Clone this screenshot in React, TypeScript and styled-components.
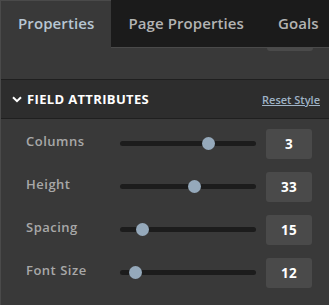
import React from 'react';
import styled, { createGlobalStyle } from 'styled-components';

const GlobalStyle = createGlobalStyle`
    html, body {
        margin: 0;
        padding: 0;
        background: #393939;
    }
    body {
        font-family: "Open Sans", "Liberation Sans", sans-serif;
    }
`;

const Panel = styled.div`
    width: 329px;
    height: 305px;
    box-sizing: border-box;
    background: #393939;
    border-left: 1px solid #4a4a4a;
    overflow: hidden;
`;

const TabBar = styled.div`
    display: flex;
    height: 48px;
    background: #1b1b1b;
`;

const Tab = styled.div<{ active?: boolean }>`
    display: flex;
    align-items: center;
    box-sizing: border-box;
    height: 48px;
    padding: 0 17px 2px;
    font-size: 15px;
    font-weight: 600;
    letter-spacing: 0.1px;
    white-space: nowrap;
    color: ${(props) => (props.active ? '#b7c6d3' : '#b3b3b3')};
    background: ${(props) => (props.active ? '#393939' : 'transparent')};
    border-top: 1px solid ${(props) => (props.active ? '#4a4a4a' : 'transparent')};
    border-bottom: 1px solid ${(props) => (props.active ? 'transparent' : '#4a4a4a')};
`;

const TabEdge = styled.div`
    width: 1px;
    height: 48px;
    background: #4a4a4a;
`;

const TopStrip = styled.div`
    display: flex;
    justify-content: flex-end;
    height: 31px;
    padding-right: 16px;
`;

const PeekBox = styled.div`
    width: 46px;
    height: 3px;
    background: #4a4a4a;
    border-radius: 0 0 3px 3px;
`;

const SectionHeader = styled.div`
    display: flex;
    align-items: center;
    height: 38px;
    padding: 0 9px 0 11px;
    background: #2d2d2d;
    border-top: 1px solid #1f1f1f;
    border-bottom: 1px solid #1f1f1f;
`;

const Chevron = styled.svg`
    width: 10px;
    height: 7px;
    margin-right: 5px;
`;

const SectionTitle = styled.div`
    flex: 1;
    color: #ffffff;
    font-size: 13px;
    font-weight: 700;
    letter-spacing: 0.35px;
`;

const ResetLink = styled.a`
    color: #9fb3c6;
    font-size: 11px;
    font-weight: 600;
    text-decoration: underline;
    cursor: pointer;
`;

const Rows = styled.div`
    display: flex;
    flex-direction: column;
    gap: 13px;
    padding: 10px 16px 0 25px;
`;

const Row = styled.div`
    display: flex;
    align-items: center;
    height: 30px;
`;

const Label = styled.div`
    width: 94px;
    margin-bottom: 6px;
    color: #a8a8a8;
    font-size: 13px;
    font-weight: 600;
    letter-spacing: 0.5px;
`;

const Track = styled.div`
    position: relative;
    width: 136px;
    height: 5px;
    margin-top: -2px;
    border-radius: 3px;
    background: #1c1c1c;
`;

const Thumb = styled.div`
    position: absolute;
    top: 50%;
    width: 13px;
    height: 13px;
    margin: -6.5px 0 0 -6.5px;
    border-radius: 50%;
    background: #95a9bb;
`;

const ValueBox = styled.div`
    display: flex;
    align-items: center;
    justify-content: center;
    width: 46px;
    height: 30px;
    margin-left: 10px;
    border-radius: 3px;
    background: #4a4a4a;
    color: #ffffff;
    font-size: 13.5px;
    font-weight: 700;
    letter-spacing: 0.3px;
`;

const attributes = [
    { label: 'Columns', value: 3, pos: 0.654 },
    { label: 'Height', value: 33, pos: 0.55 },
    { label: 'Spacing', value: 15, pos: 0.167 },
    { label: 'Font Size', value: 12, pos: 0.115 },
];

const App = () => {
    return (
        <Panel>
            <GlobalStyle />
            <TabBar>
                <Tab active>Properties</Tab>
                <TabEdge />
                <Tab>Page Properties</Tab>
                <Tab>Goals</Tab>
            </TabBar>
            <TopStrip>
                <PeekBox />
            </TopStrip>
            <SectionHeader>
                <Chevron viewBox="0 0 10 7">
                    <path d="M1 1.2 L5 5.2 L9 1.2" fill="none" stroke="#ffffff" strokeWidth="2" />
                </Chevron>
                <SectionTitle>FIELD ATTRIBUTES</SectionTitle>
                <ResetLink>Reset Style</ResetLink>
            </SectionHeader>
            <Rows>
                {attributes.map((item) => (
                    <Row key={item.label}>
                        <Label>{item.label}</Label>
                        <Track>
                            <Thumb style={{ left: `${item.pos * 100}%` }} />
                        </Track>
                        <ValueBox>{item.value}</ValueBox>
                    </Row>
                ))}
            </Rows>
        </Panel>
    );
};

export default App;
